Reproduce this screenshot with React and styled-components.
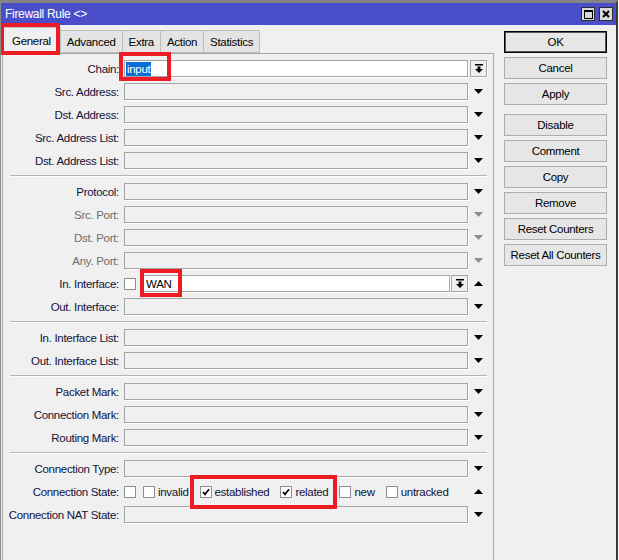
import React from "react";
import styled, { createGlobalStyle } from "styled-components";

const GlobalStyle = createGlobalStyle`
  html, body {
    margin: 0;
    padding: 0;
    background: #ffffff;
  }
  body {
    font-family: "Liberation Sans", Arial, sans-serif;
    font-size: 11.5px;
    letter-spacing: -0.3px;
  }
`;

const Window = styled.div`
  width: 618px;
  height: 560px;
  box-sizing: border-box;
  background: #f0f0f0;
  border-top: 3px solid #858585;
  border-left: 1px solid #8a8a8a;
  border-right: 2px solid #3a3a3a;
  display: flex;
  flex-direction: column;
  overflow: hidden;
`;

const TitleBar = styled.div`
  height: 22px;
  flex: none;
  background: #4a4fc9;
  color: #ffffff;
  font-size: 12px;
  display: flex;
  align-items: center;
  justify-content: space-between;
  padding: 0 3px 0 4px;
`;

const TitleButtons = styled.div`
  display: flex;
  gap: 4px;
`;

const TitleButton = styled.div`
  width: 14px;
  height: 14px;
  box-sizing: border-box;
  background: #d8d8d8;
  border: 1px solid #2e2e2e;
  display: flex;
  align-items: center;
  justify-content: center;
`;

const Body = styled.div`
  flex: 1;
  display: flex;
  min-height: 0;
`;

const LeftCol = styled.div`
  width: 492px;
  margin-left: 1px;
  display: flex;
  flex-direction: column;
`;

const TabBar = styled.div`
  height: 28px;
  flex: none;
  display: flex;
  align-items: flex-end;
  position: relative;
  z-index: 1;
`;

const Tab = styled.div`
  position: relative;
  box-sizing: border-box;
  height: ${(p) => (p.$active ? "27px" : "23px")};
  margin-bottom: ${(p) => (p.$active ? "-1px" : "0")};
  padding: 0 ${(p) => (p.$active ? "9px" : "6px")};
  background: ${(p) => (p.$active ? "#f0f0f0" : "#e4e4e4")};
  border: 1px solid #bdbdbd;
  border-bottom: ${(p) => (p.$active ? "none" : "1px solid #bdbdbd")};
  margin-right: -1px;
  display: flex;
  align-items: center;
  color: #000000;
  white-space: nowrap;
`;

const Marker = styled.span`
  position: absolute;
  left: ${(p) => p.$left}px;
  top: ${(p) => p.$top}px;
  width: ${(p) => p.$w}px;
  height: ${(p) => p.$h}px;
  box-sizing: border-box;
  border: 4px solid #ec1c24;
  pointer-events: none;
  z-index: 2;
`;

const Panel = styled.div`
  flex: 1;
  background: #f0f0f0;
  border: 1px solid #a8a8a8;
  border-bottom: none;
  padding-top: 3px;
`;

const Row = styled.div`
  height: 23px;
  display: flex;
  align-items: center;
`;

const Label = styled.div`
  width: 116px;
  flex: none;
  text-align: right;
  white-space: nowrap;
  color: ${(p) => (p.$disabled ? "#6d6d6d" : "#12123a")};
`;

const Field = styled.div`
  position: relative;
  width: 344px;
  height: 23px;
  margin-left: 5px;
  flex: none;
  display: flex;
  align-items: center;
  gap: ${(p) => p.$gap || 0}px;
`;

const Side = styled.div`
  width: 19px;
  margin-left: 1px;
  flex: none;
  display: flex;
  align-items: center;
  justify-content: center;
`;

const Input = styled.div`
  position: relative;
  flex: 1;
  height: 17px;
  box-sizing: border-box;
  border: 1px solid #a5a5a5;
  box-shadow: 1px 1px 0 #ffffff;
  background: ${(p) => (p.$enabled ? "#ffffff" : "#f0f0f0")};
  display: flex;
  align-items: center;
  padding: 0 ${(p) => p.$pad || 1}px;
  color: #000000;
  white-space: nowrap;
`;

const Selected = styled.span`
  background: #0a6cd6;
  color: #ffffff;
  line-height: 14px;
  padding: 0 1px;
`;

const DropButton = styled.div`
  width: 17px;
  height: 17px;
  flex: none;
  box-sizing: border-box;
  margin-left: ${(p) => p.$offset || 0}px;
  border: 1px solid #a5a5a5;
  box-shadow: 1px 1px 0 #ffffff;
  background: #f0f0f0;
  display: flex;
  align-items: center;
  justify-content: center;
`;

const Separator = styled.div`
  height: 8px;
  margin: 0 6px 0 7px;
  display: flex;
  align-items: center;
  &::before {
    content: "";
    flex: 1;
    height: 0;
    border-top: 1px solid #b4b4b4;
    border-bottom: 1px solid #ffffff;
  }
`;

const Box = styled.span`
  width: 12px;
  height: 12px;
  flex: none;
  box-sizing: border-box;
  border: 1px solid #8e8e8e;
  background: #ffffff;
  display: flex;
  align-items: center;
  justify-content: center;
`;

const Options = styled.div`
  display: flex;
  align-items: center;
  gap: 11px;
`;

const Option = styled.span`
  display: flex;
  align-items: center;
  gap: 3px;
  color: #12123a;
  white-space: nowrap;
`;

const Group = styled.span`
  position: relative;
  display: flex;
  align-items: center;
  gap: 11px;
`;

const RightCol = styled.div`
  margin-left: 10px;
  padding-top: 6px;
  display: flex;
  flex-direction: column;
  gap: 4px;
`;

const Button = styled.div`
  width: 103px;
  height: 22px;
  box-sizing: border-box;
  margin-top: ${(p) => (p.$spaced ? "5px" : "0")};
  background: #e6e6e6;
  border: 1px solid ${(p) => (p.$default ? "#000000" : "#adadad")};
  box-shadow: ${(p) => (p.$default ? "inset 0 0 0 1px #555555" : "none")};
  display: flex;
  align-items: center;
  justify-content: center;
  color: #000000;
  white-space: nowrap;
`;

function Arrow({ up, muted }) {
  const fill = muted ? "#8c8c8c" : "#000000";
  return (
    <svg width="9" height="5" viewBox="0 0 9 5">
      <polygon points={up ? "0,5 9,5 4.5,0" : "0,0 9,0 4.5,5"} fill={fill} />
    </svg>
  );
}

function DropIcon() {
  return (
    <svg width="8" height="9" viewBox="0 0 8 9">
      <rect x="0" y="0" width="8" height="1.5" fill="#000" />
      <rect x="2.5" y="2.5" width="3" height="2.5" fill="#000" />
      <polygon points="0,5 8,5 4,9" fill="#000" />
    </svg>
  );
}

function Check({ checked }) {
  return (
    <Box>
      {checked && (
        <svg width="8" height="8" viewBox="0 0 8 8">
          <path d="M1 4 L3 6.3 L7 1.2" stroke="#000" strokeWidth="1.7" fill="none" />
        </svg>
      )}
    </Box>
  );
}

function FieldRow({ label, disabled, up }) {
  return (
    <Row>
      <Label $disabled={disabled}>{label}</Label>
      <Field>
        <Input />
      </Field>
      <Side>
        <Arrow up={up} muted={disabled} />
      </Side>
    </Row>
  );
}

const tabs = ["General", "Advanced", "Extra", "Action", "Statistics"];
const buttons = [
  "OK",
  "Cancel",
  "Apply",
  "Disable",
  "Comment",
  "Copy",
  "Remove",
  "Reset Counters",
  "Reset All Counters",
];

export default function App() {
  return (
    <>
      <GlobalStyle />
      <Window>
        <TitleBar>
          <span>Firewall Rule &lt;&gt;</span>
          <TitleButtons>
            <TitleButton>
              <svg width="9" height="9" viewBox="0 0 9 9">
                <rect x="0.5" y="0.5" width="8" height="8" fill="none" stroke="#000" />
                <rect x="0" y="0" width="9" height="2" fill="#000" />
              </svg>
            </TitleButton>
            <TitleButton>
              <svg width="8" height="8" viewBox="0 0 8 8">
                <path d="M1 1 L7 7 M7 1 L1 7" stroke="#000" strokeWidth="2" />
              </svg>
            </TitleButton>
          </TitleButtons>
        </TitleBar>
        <Body>
          <LeftCol>
            <TabBar>
              {tabs.map((t, i) => (
                <Tab key={t} $active={i === 0}>
                  {t}
                  {i === 0 && <Marker $left={-3} $top={-5} $w={60} $h={32} />}
                </Tab>
              ))}
            </TabBar>
            <Panel>
              <Row>
                <Label>Chain:</Label>
                <Field>
                  <Input $enabled>
                    <Selected>input</Selected>
                  </Input>
                  <Marker $left={-5} $top={-5} $w={52} $h={29} />
                </Field>
                <Side>
                  <DropButton>
                    <DropIcon />
                  </DropButton>
                </Side>
              </Row>
              <FieldRow label="Src. Address:" />
              <FieldRow label="Dst. Address:" />
              <FieldRow label="Src. Address List:" />
              <FieldRow label="Dst. Address List:" />
              <Separator />
              <FieldRow label="Protocol:" />
              <FieldRow label="Src. Port:" disabled />
              <FieldRow label="Dst. Port:" disabled />
              <FieldRow label="Any. Port:" disabled />
              <Row>
                <Label>In. Interface:</Label>
                <Field $gap={6}>
                  <Check />
                  <Input $enabled $pad={3}>
                    WAN
                    <Marker $left={-3} $top={-7} $w={42} $h={28} />
                  </Input>
                  <DropButton $offset={-5}>
                    <DropIcon />
                  </DropButton>
                </Field>
                <Side>
                  <Arrow up />
                </Side>
              </Row>
              <FieldRow label="Out. Interface:" />
              <Separator />
              <FieldRow label="In. Interface List:" />
              <FieldRow label="Out. Interface List:" />
              <Separator />
              <FieldRow label="Packet Mark:" />
              <FieldRow label="Connection Mark:" />
              <FieldRow label="Routing Mark:" />
              <Separator />
              <FieldRow label="Connection Type:" />
              <Row>
                <Label>Connection State:</Label>
                <Field $gap={7}>
                  <Check />
                  <Options>
                    <Option>
                      <Check />
                      invalid
                    </Option>
                    <Group>
                      <Option>
                        <Check checked />
                        established
                      </Option>
                      <Option>
                        <Check checked />
                        related
                      </Option>
                      <Marker $left={-10} $top={-11} $w={147} $h={34} />
                    </Group>
                    <Option>
                      <Check />
                      new
                    </Option>
                    <Option>
                      <Check />
                      untracked
                    </Option>
                  </Options>
                </Field>
                <Side>
                  <Arrow up />
                </Side>
              </Row>
              <FieldRow label="Connection NAT State:" />
            </Panel>
          </LeftCol>
          <RightCol>
            {buttons.map((b, i) => (
              <Button key={b} $default={i === 0} $spaced={b === "Disable"}>
                {b}
              </Button>
            ))}
          </RightCol>
        </Body>
      </Window>
    </>
  );
}
